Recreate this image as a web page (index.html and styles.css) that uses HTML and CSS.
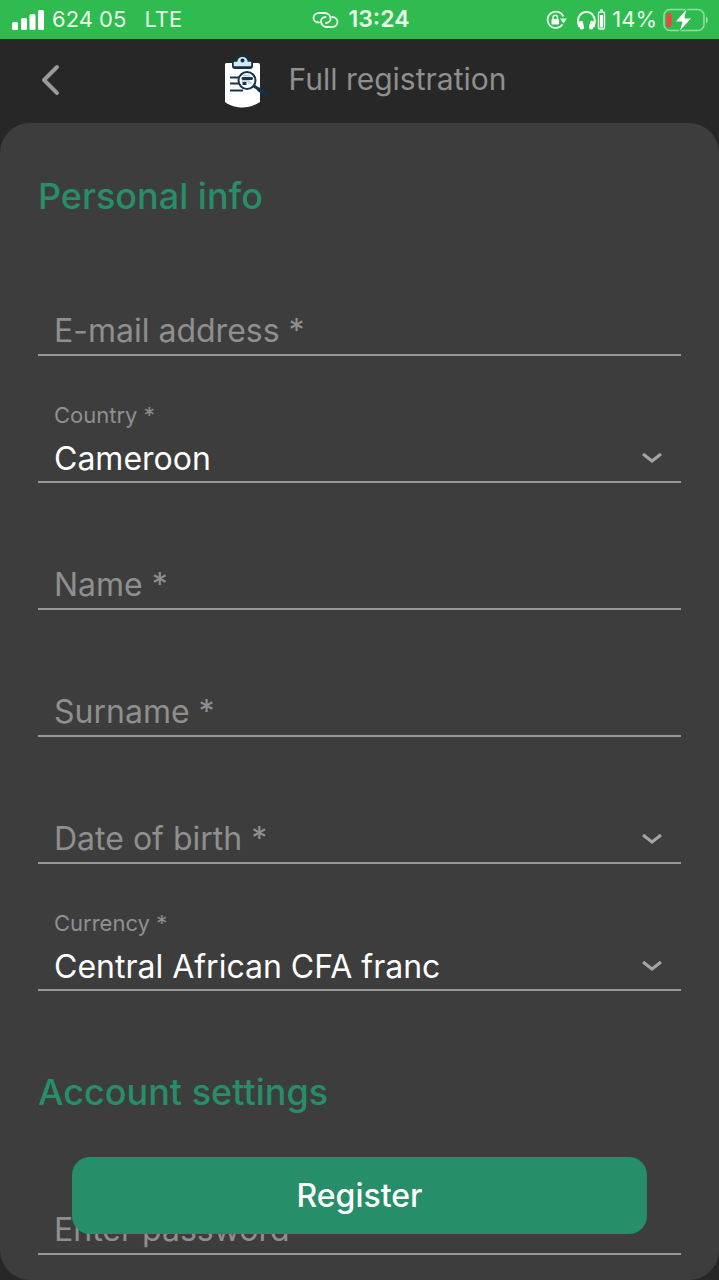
FILE: index.html
```html
<!DOCTYPE html>
<html lang="en">
<head>
    <meta charset="UTF-8">
    <meta name="viewport" content="width=device-width, initial-scale=1.0">
    <title>Full registration</title>
    <link rel="stylesheet" href="styles.css">
</head>
<body>
    <div class="status-bar">
        <div class="status-left">
            <svg width="32" height="20" viewBox="0 0 32 20" fill="#fff">
                <rect x="0" y="12" width="6" height="8" rx="1.5"/>
                <rect x="9" y="8" width="6" height="12" rx="1.5"/>
                <rect x="17.500" y="4" width="6" height="16" rx="1.5"/>
                <rect x="26" y="0" width="6" height="20" rx="1.5"/>
            </svg>
            <span>624 05</span>
            <span class="network">LTE</span>
        </div>
        <div class="status-time">
            <svg width="27" height="18" viewBox="0 0 27 18" fill="none" stroke="#e9ffe9" stroke-width="1.8" stroke-linecap="round">
                <path d="M7 11.500C3.500 11.500 1.500 9.500 1.500 7C1.500 4 4 2 7 2H12.500C16 2 18.500 4.500 18.500 7.500C18.500 10 16.500 12 14 12"/>
                <path d="M20 6C23.500 6 25.500 8.500 25.500 11C25.500 14 23 16 20 16H15C11.500 16 9 13.500 9 10.500C9 8 11 6 13.500 6"/>
            </svg>
            <span>13:24</span>
        </div>
        <div class="status-right">
            <svg width="21" height="20" viewBox="0 0 21 20" fill="none" stroke="#e9ffe9" stroke-width="1.8">
                <path d="M17.300 6.500A8.200 8.200 0 1 0 16.500 14.500"/>
                <path d="M14 8.500H21L17.500 13.500Z" fill="#e9ffe9" stroke="none"/>
                <rect x="5.500" y="9" width="7.500" height="5.500" rx="1" fill="#fff" stroke="none"/>
                <path d="M7 9V7.500A2.200 2.200 0 0 1 11.500 7.500V9" stroke-width="1.400"/>
            </svg>
            <svg class="headphones" width="29" height="22" viewBox="0 0 29 22" fill="none" stroke="#e9ffe9">
                <path d="M2.500 18C-1.500 10 3 3 9.500 3S20 10 16.500 18" stroke-width="2"/>
                <rect x="2" y="12" width="4.500" height="8.500" rx="1.800" transform="rotate(-14 4 16)" fill="#fff" stroke="none"/>
                <rect x="12.500" y="12" width="4.500" height="8.500" rx="1.800" transform="rotate(14 15 16)" fill="#fff" stroke="none"/>
                <rect x="21.500" y="3" width="6" height="17" rx="1.500" stroke-width="1.400"/>
                <rect x="23" y="6" width="3" height="12.500" fill="#fff" stroke="none"/>
                <path d="M23 1.200H26" stroke-width="1.500"/>
            </svg>
            <span>14%</span>
            <svg width="46" height="24" viewBox="0 0 46 24">
                <rect x="1" y="1.500" width="40" height="21" rx="6" fill="none" stroke="#8fe0a0" stroke-width="1.600"/>
                <path d="M43 8.500C45.500 9.500 45.500 14.500 43 15.500Z" fill="#8fe0a0"/>
                <rect x="3.500" y="5" width="5" height="14" rx="2" fill="#f4443c"/>
                <path d="M24 0L12 14H19L16 24L29 10H22Z" fill="#fff" stroke="#2fbb4f" stroke-width="1"/>
            </svg>
        </div>
    </div>

    <header class="header">
        <button class="back" type="button" aria-label="Back">
            <svg width="20" height="32" viewBox="0 0 20 32" fill="none" stroke="#9a9a9a" stroke-width="4" stroke-linecap="round" stroke-linejoin="round">
                <path d="M17 3L4 16L17 29"/>
            </svg>
        </button>
        <div class="title">
            <svg width="58" height="56" viewBox="0 0 58 56">
                <path d="M12 11Q12 10 14 10H45Q47 10 47 12V49C41 53 35 54.500 29.500 54.500S17 53 12 49Z" fill="#fff"/>
                <path d="M22 9H25C25 2 34 2 34 9H37V13H22Z" fill="#1b2e3f" stroke="#1b2e3f" stroke-width="6" stroke-linejoin="round"/>
                <path d="M21.500 9.500H25C25 3 34 3 34 9.500H37.500V12.500H21.500Z" fill="#cfeafb" stroke="#cfeafb" stroke-width="1.500" stroke-linejoin="round"/>
                <circle cx="29.500" cy="7.500" r="2" fill="#1b2e3f"/>
                <path d="M17 24.500H27M17 30.500H27M17 37.500H30" stroke="#1b3448" stroke-width="2"/>
                <circle cx="34" cy="27.500" r="8.500" fill="#fff" stroke="#1b3448" stroke-width="2"/>
                <path d="M30 25.500H38.500" stroke="#1b3448" stroke-width="3" stroke-linecap="round"/>
                <path d="M29.500 30.500H33.500" stroke="#1b3448" stroke-width="3"/>
                <path d="M30 22.500H37M35 30H39M29 28H37" stroke="#a9c9e6" stroke-width="1.500"/>
                <path d="M41 33L46 36.500" stroke="#1b3448" stroke-width="3"/>
                <path d="M46 36.500L54 42" stroke="#16304a" stroke-width="4" stroke-linecap="round"/>
            </svg>
            <h1>Full registration</h1>
        </div>
    </header>

    <form class="panel">
        <h2>Personal info</h2>
        <div class="field">
            <input type="email" id="email" required>
            <label for="email">E-mail address *</label>
        </div>
        <div class="field filled">
            <select id="country">
                <option>Cameroon</option>
            </select>
            <label for="country">Country *</label>
            <svg class="arrow" width="22" height="12" viewBox="0 0 22 12"><path d="M2 2L11 9L20 2"/></svg>
        </div>
        <div class="field">
            <input type="text" id="name" required>
            <label for="name">Name *</label>
        </div>
        <div class="field">
            <input type="text" id="surname" required>
            <label for="surname">Surname *</label>
        </div>
        <div class="field">
            <select id="birth">
                <option value=""></option>
            </select>
            <label for="birth">Date of birth *</label>
            <svg class="arrow" width="22" height="12" viewBox="0 0 22 12"><path d="M2 2L11 9L20 2"/></svg>
        </div>
        <div class="field filled">
            <select id="currency">
                <option>Central African CFA franc</option>
            </select>
            <label for="currency">Currency *</label>
            <svg class="arrow" width="22" height="12" viewBox="0 0 22 12"><path d="M2 2L11 9L20 2"/></svg>
        </div>

        <h2 class="next">Account settings</h2>
        <div class="field">
            <input type="password" id="password" required>
            <label for="password">Enter password</label>
        </div>

        <button class="register" type="submit">Register</button>
    </form>
</body>
</html>
```
FILE: styles.css
```css
* {
    box-sizing: border-box;
}
body {
    margin: 0;
    background-color: #272727;
    font-family: Inter, Roboto, sans-serif;
    color: #fff;
}
svg {
    display: block;
    flex: none;
}

/* Status bar */
.status-bar {
    display: grid;
    grid-template-columns: 1fr auto 1fr;
    align-items: center;
    height: 39px;
    padding: 0 10px 0 12px;
    background-color: #2fbb4f;
    color: #e9ffe9;
    font-size: 22px;
    line-height: 39px;
}
.status-left,
.status-time,
.status-right {
    display: flex;
    align-items: center;
    gap: 8px;
}
.network {
    margin-left: 10px;
}
.status-time {
    gap: 10px;
    font-size: 23px;
    font-weight: 600;
}
.status-right {
    justify-content: flex-end;
    gap: 6px;
}
.headphones {
    margin-left: 4px;
}

/* Header */
.header {
    display: grid;
    grid-template-columns: 1fr auto 1fr;
    align-items: center;
    height: 84px;
    padding: 0 28px;
}
.back {
    justify-self: start;
    padding: 8px 12px 10px;
    border: none;
    background: none;
    cursor: pointer;
}
.title {
    display: flex;
    align-items: center;
    gap: 18px;
}
h1 {
    margin: 0;
    padding-bottom: 4px;
    font-size: 30px;
    font-weight: 400;
    line-height: 40px;
    color: #8f8f8f;
}

/* Form */
.panel {
    padding: 50px 38px 25px;
    border-radius: 30px;
    background-color: #3d3d3d;
}
h2 {
    margin: 0 0 10px;
    font-size: 36px;
    font-weight: 500;
    line-height: 46px;
    color: #268e68;
}
h2.next {
    margin: 78px 0 13px;
}
.field {
    display: grid;
    grid-template-rows: 34px 46px;
    padding-top: 45px;
    border-bottom: 2px solid #989898;
}
.field input,
.field select {
    grid-area: 2 / 1;
    width: 100%;
    margin: 0;
    padding: 0 60px 0 16px;
    border: none;
    outline: none;
    background: none;
    appearance: none;
    color: #fff;
    font-family: inherit;
    font-size: 32px;
}
/* The label sits on the line until the field has a value */
.field label {
    grid-area: 2 / 1;
    align-self: center;
    padding-left: 16px;
    font-size: 32px;
    line-height: 40px;
    color: #8f8f8f;
    pointer-events: none;
}
.field.filled label,
.field input:focus + label,
.field input:valid + label {
    grid-area: 1 / 1;
    align-self: start;
    font-size: 22px;
    line-height: 28px;
}
.arrow {
    grid-area: 2 / 1;
    place-self: center end;
    margin-right: 18px;
    fill: none;
    stroke: #a5a5a5;
    stroke-width: 3;
    pointer-events: none;
}
.register {
    position: fixed;
    right: 10%;
    bottom: 46px;
    left: 10%;
    height: 77px;
    border: none;
    border-radius: 18px;
    background-color: #268e68;
    color: #fff;
    font-family: inherit;
    font-size: 32px;
    font-weight: 500;
    cursor: pointer;
}
```
